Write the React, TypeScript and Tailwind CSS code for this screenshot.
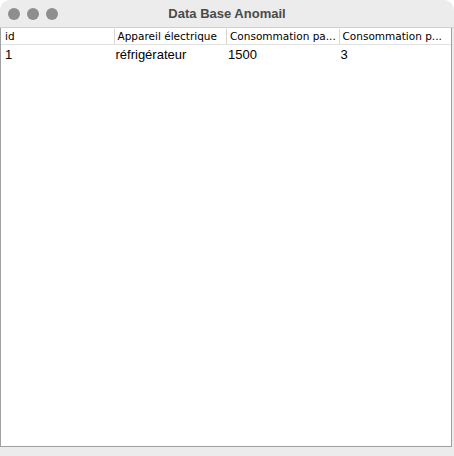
import React from "react";

const columns = ["id", "Appareil électrique", "Consommation pa...", "Consommation p..."];
const rows = [["1", "réfrigérateur", "1500", "3"]];

export default function App() {
  return (
    <div className="w-[454px] h-[456px] bg-white font-['Helvetica','Liberation_Sans',sans-serif]">
      <div className="w-full h-full flex flex-col bg-[#ececec] rounded-t-[10px] overflow-hidden">
        {/* title bar */}
        <div className="relative h-[28px] flex items-center justify-center border-b border-[#d0d0d0] shrink-0">
          <div className="absolute left-[8px] top-[8px] flex gap-[7px]">
            <span className="w-[12px] h-[12px] rounded-full bg-[#8e8e8e]" />
            <span className="w-[12px] h-[12px] rounded-full bg-[#8e8e8e]" />
            <span className="w-[12px] h-[12px] rounded-full bg-[#8e8e8e]" />
          </div>
          <span className="text-[13px] font-bold text-[#4a4a4a]">Data Base Anomail</span>
        </div>

        {/* table */}
        <div className="flex-1 mr-[2px] bg-white border-l border-b border-r border-[#a0a0a0] flex flex-col">
          <div className="grid grid-cols-4 h-[17px] pt-[1px] border-b border-[#e0e0e0] text-[10.5px] text-black leading-[15px] font-['DejaVu_Sans',sans-serif]">
            {columns.map((c, i) => (
              <div
                key={c}
                className={
                  i === 0
                    ? "pl-[4px] whitespace-nowrap overflow-hidden"
                    : "pl-[3px] border-l border-[#d6d6d6] whitespace-nowrap overflow-hidden"
                }
              >
                {c}
              </div>
            ))}
          </div>
          {rows.map((r, ri) => (
            <div key={ri} className="grid grid-cols-4 h-[19px] pt-[1px] text-[13px] leading-[18px] text-black">
              {r.map((v, i) => (
                <div key={i} className={i === 0 ? "pl-[4px]" : "pl-[2px]"}>
                  {v}
                </div>
              ))}
            </div>
          ))}
        </div>
        <div className="h-[9px] shrink-0" />
      </div>
    </div>
  );
}
